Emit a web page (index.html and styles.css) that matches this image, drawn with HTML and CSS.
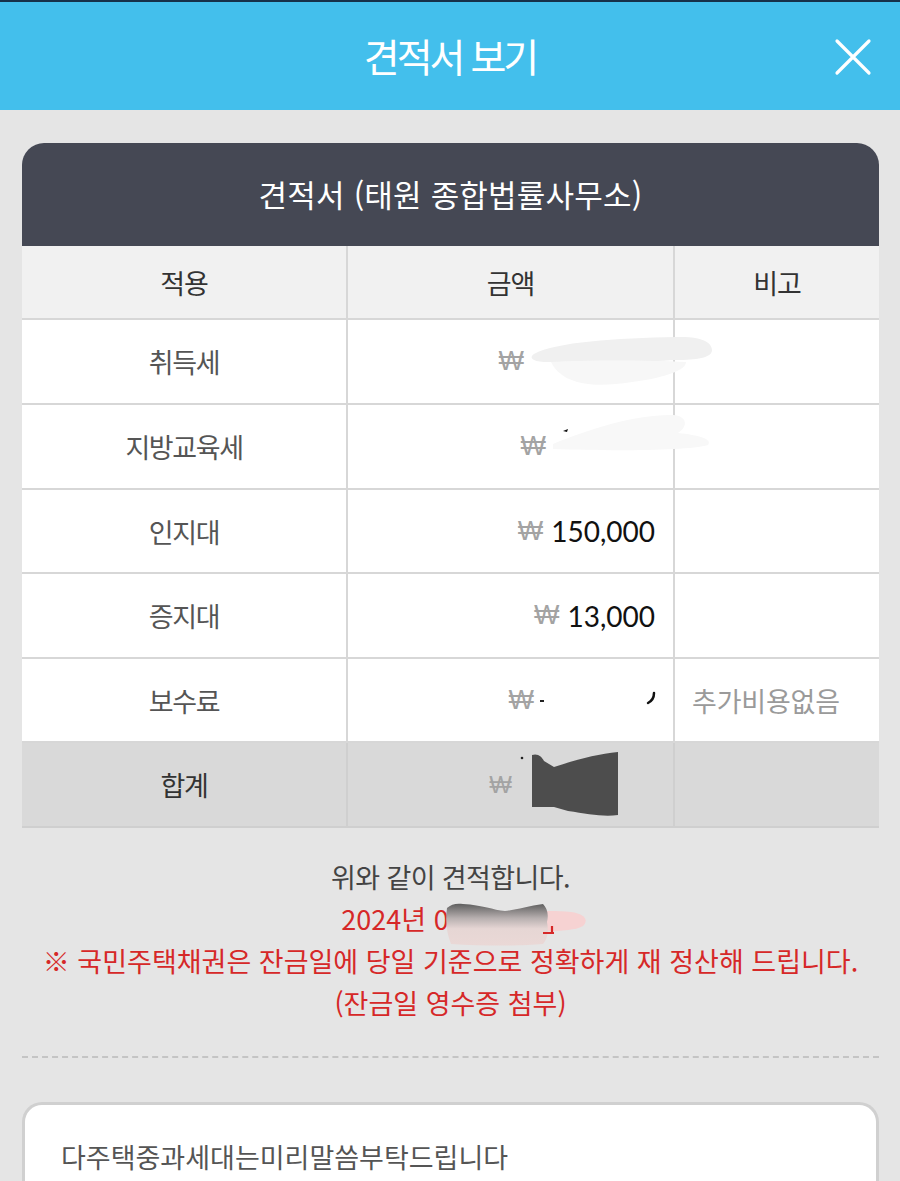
FILE: index.html
```html
<!DOCTYPE html>
<html lang="ko">
<head>
<meta charset="utf-8">
<title>견적서 보기</title>
<link rel="stylesheet" href="styles.css">
</head>
<body>
<header class="topbar">
  <span class="topbar-spacer"></span>
  <h1 class="topbar-title">견적서 보기</h1>
  <button class="close-btn" aria-label="닫기">
    <svg width="40" height="40" viewBox="0 0 40 40"><path d="M4 4 L36 36 M36 4 L4 36" stroke="#fff" stroke-width="3.2" stroke-linecap="round" fill="none"/></svg>
  </button>
</header>

<main class="content">
  <section class="quote-card">
    <div class="quote-title">견적서 (태원 종합법률사무소)</div>
    <table class="quote-table">
      <colgroup><col class="c1"><col class="c2"><col class="c3"></colgroup>
      <thead>
        <tr><th>적용</th><th>금액</th><th>비고</th></tr>
      </thead>
      <tbody>
        <tr class="r85">
          <td class="label">취득세</td>
          <td class="amount">
            <span class="won">₩</span><span class="gap gap-131"></span>
            <svg class="smear smear-1" width="190" height="60" viewBox="0 0 190 60"><path d="M8 22 C30 10 90 6 150 5 C175 4 186 10 186 18 C186 26 170 28 150 28 C120 30 70 30 20 30 C8 30 2 26 8 22 Z" fill="#f0f0f0"/><path d="M25 30 C60 28 120 28 160 30 C160 40 130 48 90 52 C60 55 35 50 25 30 Z" fill="#f7f7f7"/></svg>
          </td>
          <td></td>
        </tr>
        <tr class="r85">
          <td class="label">지방교육세</td>
          <td class="amount">
            <span class="won">₩</span><span class="gap gap-109"></span>
            <svg class="smear smear-2" width="170" height="50" viewBox="0 0 170 50"><path d="M5 35 C40 20 90 5 125 6 C140 7 140 18 130 24 C150 26 165 30 160 36 C140 42 60 42 5 40 Z" fill="#f8f8f8"/><path d="M15 22 L20 20 L19 23 Z" fill="#111"/></svg>
          </td>
          <td></td>
        </tr>
        <tr class="r84">
          <td class="label">인지대</td>
          <td class="amount"><span class="won">₩</span><span class="num">150,000</span></td>
          <td></td>
        </tr>
        <tr class="r85">
          <td class="label">증지대</td>
          <td class="amount"><span class="won">₩</span><span class="num">13,000</span></td>
          <td></td>
        </tr>
        <tr class="r84">
          <td class="label">보수료</td>
          <td class="amount">
            <span class="won">₩</span><span class="gap gap-121"></span>
            <svg class="smear smear-3" width="130" height="30" viewBox="0 0 130 30"><path d="M4 16 L8 16" stroke="#222" stroke-width="2"/><path d="M112 18 C116 16 118 12 118 8" stroke="#111" stroke-width="2.5" fill="none" stroke-linecap="round"/></svg>
          </td>
          <td class="note">추가비용없음</td>
        </tr>
      </tbody>
      <tfoot>
        <tr class="r85">
          <td class="label total">합계</td>
          <td class="amount">
            <span class="won won-sm">₩</span><span class="gap gap-143"></span>
            <svg class="smear smear-4" width="100" height="70" viewBox="0 0 100 70"><circle cx="4" cy="9" r="1.3" fill="#222"/><path d="M14 6 C20 4 24 8 26 12 L36 18 C60 10 80 5 100 3 L100 66 C85 68 70 65 50 62 L36 58 L14 58 Z" fill="#4d4d4d"/></svg>
          </td>
          <td></td>
        </tr>
      </tfoot>
    </table>
  </section>

  <div class="notes">
    <p class="note-line">위와 같이 견적합니다.</p>
    <p class="note-line red">2024년 0<span class="date-mask"><svg class="date-blob" width="150" height="46" viewBox="0 0 150 46"><defs><linearGradient id="g1" x1="0" y1="0" x2="0" y2="1"><stop offset="0" stop-color="#5e5e5e"/><stop offset="0.35" stop-color="#b8b0b0"/><stop offset="0.6" stop-color="#e6d6d4"/><stop offset="1" stop-color="#ead8d6"/></linearGradient></defs><path d="M60 12 C80 9 110 8 128 10 C142 12 146 18 140 24 C130 30 100 30 70 28 Z" fill="#f6d2d2"/><path d="M4 6 C8 2 14 1 20 2 C40 3 50 8 62 9 C72 8 86 4 100 2 C104 6 106 12 104 20 C106 30 104 38 100 42 C80 44 40 44 8 42 C4 32 2 20 4 6 Z" fill="url(#g1)"/><path d="M100 31 L111 31 M109 24 L109 31" stroke="#d62828" stroke-width="2.2" fill="none"/></svg></span></p>
    <p class="note-line red">※ 국민주택채권은 잔금일에 당일 기준으로 정확하게 재 정산해 드립니다.</p>
    <p class="note-line red">(잔금일 영수증 첨부)</p>
  </div>

  <hr class="divider">

  <div class="memo-card">
    <p class="memo-text">다주택중과세대는미리말씀부탁드립니다</p>
  </div>
</main>
</body>
</html>
```

FILE: styles.css
```css
* { box-sizing: border-box; }

html, body {
  margin: 0;
  padding: 0;
}

body {
  background: #e5e5e5;
  font-family: "Noto Sans CJK KR", "Noto Sans", sans-serif;
  color: #444;
  height: 1181px;
  overflow: hidden;
}

.topbar {
  height: 110px;
  background: #43bfec;
  border-top: 2px solid #16314a;
  display: grid;
  grid-template-columns: 1fr auto 1fr;
  align-items: center;
}

.topbar-title {
  margin: 0;
  font-size: 39px;
  font-weight: 400;
  color: #fff;
  letter-spacing: -3px;
  line-height: 1;
  padding-bottom: 2px;
}

.close-btn {
  justify-self: end;
  margin-right: 27px;
  margin-top: 2px;
  width: 40px;
  height: 40px;
  padding: 0;
  border: 0;
  background: transparent;
  display: flex;
}

.content {
  padding: 33px 21px 0 22px;
}

.quote-card {
  background: #fff;
  border-radius: 22px 22px 0 0;
  overflow: hidden;
}

.quote-title {
  height: 103px;
  background: #454854;
  color: #fff;
  display: flex;
  align-items: center;
  justify-content: center;
  font-size: 31px;
  letter-spacing: 0.2px;
  padding-bottom: 2px;
}

.quote-table {
  width: 100%;
  border-collapse: collapse;
  table-layout: fixed;
}

.c1 { width: 325px; }
.c2 { width: 327px; }
.c3 { width: 205px; }

.quote-table th,
.quote-table td {
  border: 2px solid #d7d7d7;
  padding: 0;
  font-weight: 400;
}

.quote-table tr > :first-child { border-left: 0; }
.quote-table tr > :last-child { border-right: 0; }
.quote-table thead th { border-top: 0; }

.quote-table thead tr {
  height: 73px;
  background: #f1f1f1;
}

.quote-table th {
  font-size: 27px;
  color: #333;
  letter-spacing: -1px;
}

.r85 { height: 85px; }
.r84 { height: 84px; }

.label {
  text-align: center;
  font-size: 27px;
  color: #555;
  letter-spacing: -1.4px;
}

.amount {
  position: relative;
  text-align: right;
  padding-right: 18px !important;
  white-space: nowrap;
}

.won {
  font-family: "Liberation Sans", Arial, sans-serif;
  font-size: 27px;
  color: #a3a3a3;
  margin-right: 8px;
  vertical-align: middle;
}

.won-sm { font-size: 24px; }

.num {
  font-family: Lato, "Liberation Sans", sans-serif;
  font-size: 28px;
  color: #111;
  vertical-align: middle;
}

.gap {
  display: inline-block;
  vertical-align: middle;
}
.gap-131 { width: 123px; }
.gap-109 { width: 101px; }
.gap-121 { width: 113px; }
.gap-143 { width: 135px; }

.smear {
  position: absolute;
  pointer-events: none;
}
.smear-1 { left: 178px; top: 12px; }
.smear-2 { left: 200px; top: 4px; }
.smear-3 { left: 188px; top: 26px; }
.smear-4 { left: 170px; top: 6px; }

.note {
  font-size: 27px;
  color: #9a9a9a;
  padding-left: 17px !important;
  letter-spacing: -0.2px;
}

.quote-table tfoot tr {
  background: #d9d9d9;
}
.quote-table tfoot td {
  border-color: #cfcfcf;
}

.label.total { color: #333; }

.notes {
  margin-top: 28px;
  text-align: center;
}

.note-line {
  margin: 0;
  font-size: 27px;
  line-height: 42px;
  color: #444;
  letter-spacing: -0.6px;
}

.note-line.red {
  color: #d62828;
  letter-spacing: 0;
}

.date-mask {
  display: inline-block;
  position: relative;
  width: 111px;
  height: 26px;
  vertical-align: middle;
}

.date-blob {
  position: absolute;
  left: -6px;
  top: -8px;
}

.divider {
  margin: 32px 0 0;
  border: 0;
  border-top: 2px dashed #c4c4c4;
  height: 0;
}

.memo-card {
  margin-top: 44px;
  background: #fff;
  border: 3px solid #d0d0d0;
  border-bottom: 0;
  border-radius: 20px 20px 0 0;
  padding: 34px 36px 40px;
}

.memo-text {
  margin: 0;
  font-size: 27px;
  color: #555;
  letter-spacing: 0;
  line-height: 36px;
}
```
